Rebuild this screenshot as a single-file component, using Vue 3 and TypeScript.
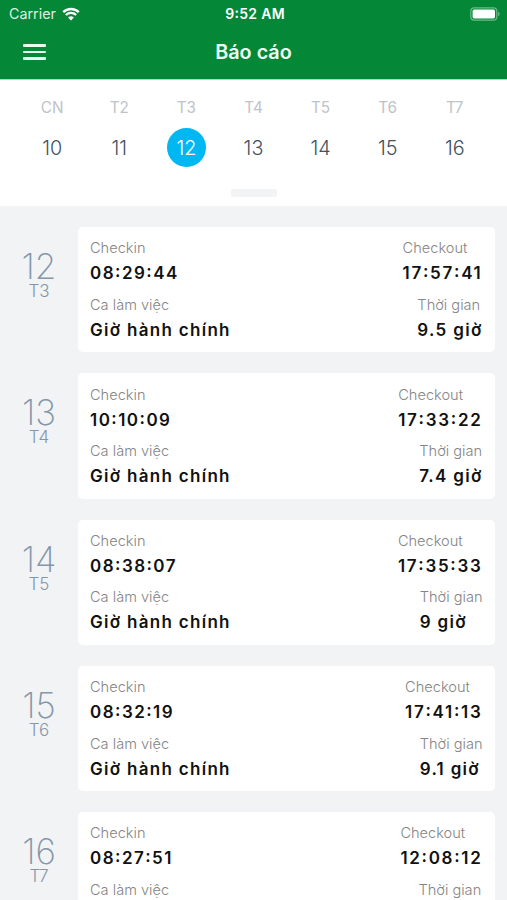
<script setup lang="ts">
interface WeekDay {
  label: string
  day: number
}

interface Entry {
  day: number
  weekday: string
  checkin: string
  checkout: string
  shift: string
  duration: string
}

const selectedDay = 12

const week: WeekDay[] = [
  { label: 'CN', day: 10 },
  { label: 'T2', day: 11 },
  { label: 'T3', day: 12 },
  { label: 'T4', day: 13 },
  { label: 'T5', day: 14 },
  { label: 'T6', day: 15 },
  { label: 'T7', day: 16 },
]

const shift = 'Giờ hành chính'

const entries: Entry[] = [
  { day: 12, weekday: 'T3', checkin: '08:29:44', checkout: '17:57:41', shift, duration: '9.5 giờ' },
  { day: 13, weekday: 'T4', checkin: '10:10:09', checkout: '17:33:22', shift, duration: '7.4 giờ' },
  { day: 14, weekday: 'T5', checkin: '08:38:07', checkout: '17:35:33', shift, duration: '9 giờ' },
  { day: 15, weekday: 'T6', checkin: '08:32:19', checkout: '17:41:13', shift, duration: '9.1 giờ' },
  { day: 16, weekday: 'T7', checkin: '08:27:51', checkout: '12:08:12', shift, duration: '3.7 giờ' },
]

// Splits a time so its colons can be centred on the digit height.
const timeParts = (time: string): string[] => time.split(/(:)/)
</script>

<template>
  <div class="screen">
    <header class="header">
      <div class="status">
        <div class="carrier">
          <span>Carrier</span>
          <svg class="wifi" viewBox="0 0 18 14" width="18" height="14">
            <path d="M1.2 5.1a11.2 11.2 0 0 1 15.6 0" />
            <path d="M3.9 8a7.3 7.3 0 0 1 10.2 0" />
            <path class="dot" d="M9 13.6 6.1 10.6a4.1 4.1 0 0 1 5.8 0z" />
          </svg>
        </div>
        <span class="clock">9<span class="colon">:</span>52 AM</span>
        <svg class="battery" viewBox="0 0 31 14" width="31" height="14">
          <rect class="shell" x="0.8" y="0.8" width="26" height="12.4" rx="3.4" />
          <rect class="charge" x="2.6" y="2.6" width="22.4" height="8.8" rx="1.6" />
          <path class="cap" d="M28.2 4.8c1.9.7 1.9 3.7 0 4.4z" />
        </svg>
      </div>
      <div class="navbar">
        <button class="menu" type="button" aria-label="Menu">
          <i></i><i></i><i></i>
        </button>
        <h1>Báo cáo</h1>
        <span></span>
      </div>
    </header>

    <section class="calendar">
      <div class="week">
        <div v-for="item in week" :key="item.day" class="cell">
          <span class="cell-label">{{ item.label }}</span>
          <span class="cell-day" :class="{ selected: item.day === selectedDay }">{{ item.day }}</span>
        </div>
      </div>
      <div class="knob"></div>
    </section>

    <main class="list">
      <article v-for="entry in entries" :key="entry.day" class="row">
        <div class="date">
          <span class="date-day">{{ entry.day }}</span>
          <span class="date-week">{{ entry.weekday }}</span>
        </div>
        <div class="card">
          <div class="pair">
            <div class="field">
              <span class="label">Checkin</span>
              <span class="value time"><span
                v-for="(part, i) in timeParts(entry.checkin)"
                :key="i"
                :class="{ colon: part === ':' }"
              >{{ part }}</span></span>
            </div>
            <div class="field">
              <span class="label">Checkout</span>
              <span class="value time out"><span
                v-for="(part, i) in timeParts(entry.checkout)"
                :key="i"
                :class="{ colon: part === ':' }"
              >{{ part }}</span></span>
            </div>
          </div>
          <div class="pair">
            <div class="field">
              <span class="label">Ca làm việc</span>
              <span class="value">{{ entry.shift }}</span>
            </div>
            <div class="field">
              <span class="label">Thời gian</span>
              <span class="value">{{ entry.duration }}</span>
            </div>
          </div>
        </div>
      </article>
    </main>
  </div>
</template>

<style>
body {
  margin: 0;
  overflow: hidden;
}
</style>

<style scoped>
.screen {
  display: flex;
  flex-direction: column;
  height: 900px;
  overflow: hidden;
  background: #f1f3f5;
  font-family: Inter, Roboto, sans-serif;
}

.header {
  flex: none;
  box-sizing: border-box;
  height: 79px;
  background: #048838;
  color: #fff;
}

.status {
  display: grid;
  grid-template-columns: 1fr auto 1fr;
  align-items: center;
  height: 27px;
  padding: 0 6px 0 9px;
  font-size: 14px;
  line-height: 27px;
}

.carrier {
  display: flex;
  align-items: center;
  gap: 6px;
  font-size: 14.3px;
  color: #d9f2e1;
}

.wifi {
  fill: none;
  stroke: #fff;
  stroke-width: 2.4;
}

.wifi .dot {
  fill: #fff;
  stroke: none;
}

.clock {
  padding-top: 1px;
  font-size: 14px;
  font-weight: 600;
  letter-spacing: 0.3px;
  line-height: 26px;
}

.colon {
  line-height: 1;
  vertical-align: 0.09em;
}

.battery {
  justify-self: end;
}

.shell {
  fill: none;
  stroke: #6dbb8a;
  stroke-width: 1.2;
}

.charge {
  fill: #fff;
}

.cap {
  fill: #6dbb8a;
}

.navbar {
  display: grid;
  grid-template-columns: 1fr auto 1fr;
  align-items: center;
  height: 50px;
  padding: 0 22.5px;
}

.menu {
  display: flex;
  flex-direction: column;
  gap: 4px;
  width: 23px;
  padding: 0;
  border: 0;
  background: none;
}

.menu i {
  height: 2.4px;
  border-radius: 1px;
  background: #e6fff0;
}

h1 {
  margin: 0;
  font-size: 19.8px;
  font-weight: 600;
  line-height: 50px;
  color: #effff4;
}

.calendar {
  flex: none;
  display: flex;
  flex-direction: column;
  align-items: center;
  box-sizing: border-box;
  height: 127px;
  border-top: 1px solid #a9dbbb;
  background: #fff;
}

.week {
  display: grid;
  grid-template-columns: repeat(7, 67.1px);
  height: 109px;
}

.cell {
  display: flex;
  flex-direction: column;
  align-items: center;
}

.cell-label {
  margin-top: 17px;
  font-size: 15.3px;
  line-height: 21px;
  color: #bec3c8;
}

.cell-day {
  box-sizing: border-box;
  width: 39px;
  height: 39px;
  margin-top: 10px;
  padding-top: 1px;
  border-radius: 50%;
  font-size: 19.8px;
  font-weight: 300;
  line-height: 38px;
  text-align: center;
  color: #43515c;
}

.cell-day.selected {
  background: #00b8f1;
  color: #fff;
}

.knob {
  width: 46px;
  height: 8px;
  border-radius: 3px;
  background: #f1f3f5;
}

.list {
  display: flex;
  flex-direction: column;
  gap: 21px;
  padding: 21px 12.5px 0 0;
}

.row {
  flex: none;
  display: flex;
  height: 125.25px;
}

.date {
  display: flex;
  flex-direction: column;
  align-items: center;
  width: 78px;
  padding-top: 24px;
  box-sizing: border-box;
  color: #8496a8;
}

.date-day {
  font-size: 35px;
  font-weight: 200;
  line-height: 30px;
}

.date-week {
  font-size: 17px;
  font-weight: 300;
  line-height: 20px;
}

.card {
  flex: 1;
  display: flex;
  flex-direction: column;
  gap: 6px;
  box-sizing: border-box;
  padding: 11.4px 12px 0;
  border-radius: 5px;
  background: #fff;
}

.pair {
  display: flex;
  justify-content: space-between;
}

.field {
  display: flex;
  flex-direction: column;
}

.label {
  font-size: 14.6px;
  font-weight: 300;
  line-height: 20px;
  color: #858585;
}

.value {
  padding-top: 1px;
  font-size: 17px;
  font-weight: 600;
  line-height: 29.5px;
  letter-spacing: 1.3px;
  color: #111;
}

.time {
  letter-spacing: 1.45px;
}

.time.out {
  letter-spacing: 1.7px;
}
</style>
